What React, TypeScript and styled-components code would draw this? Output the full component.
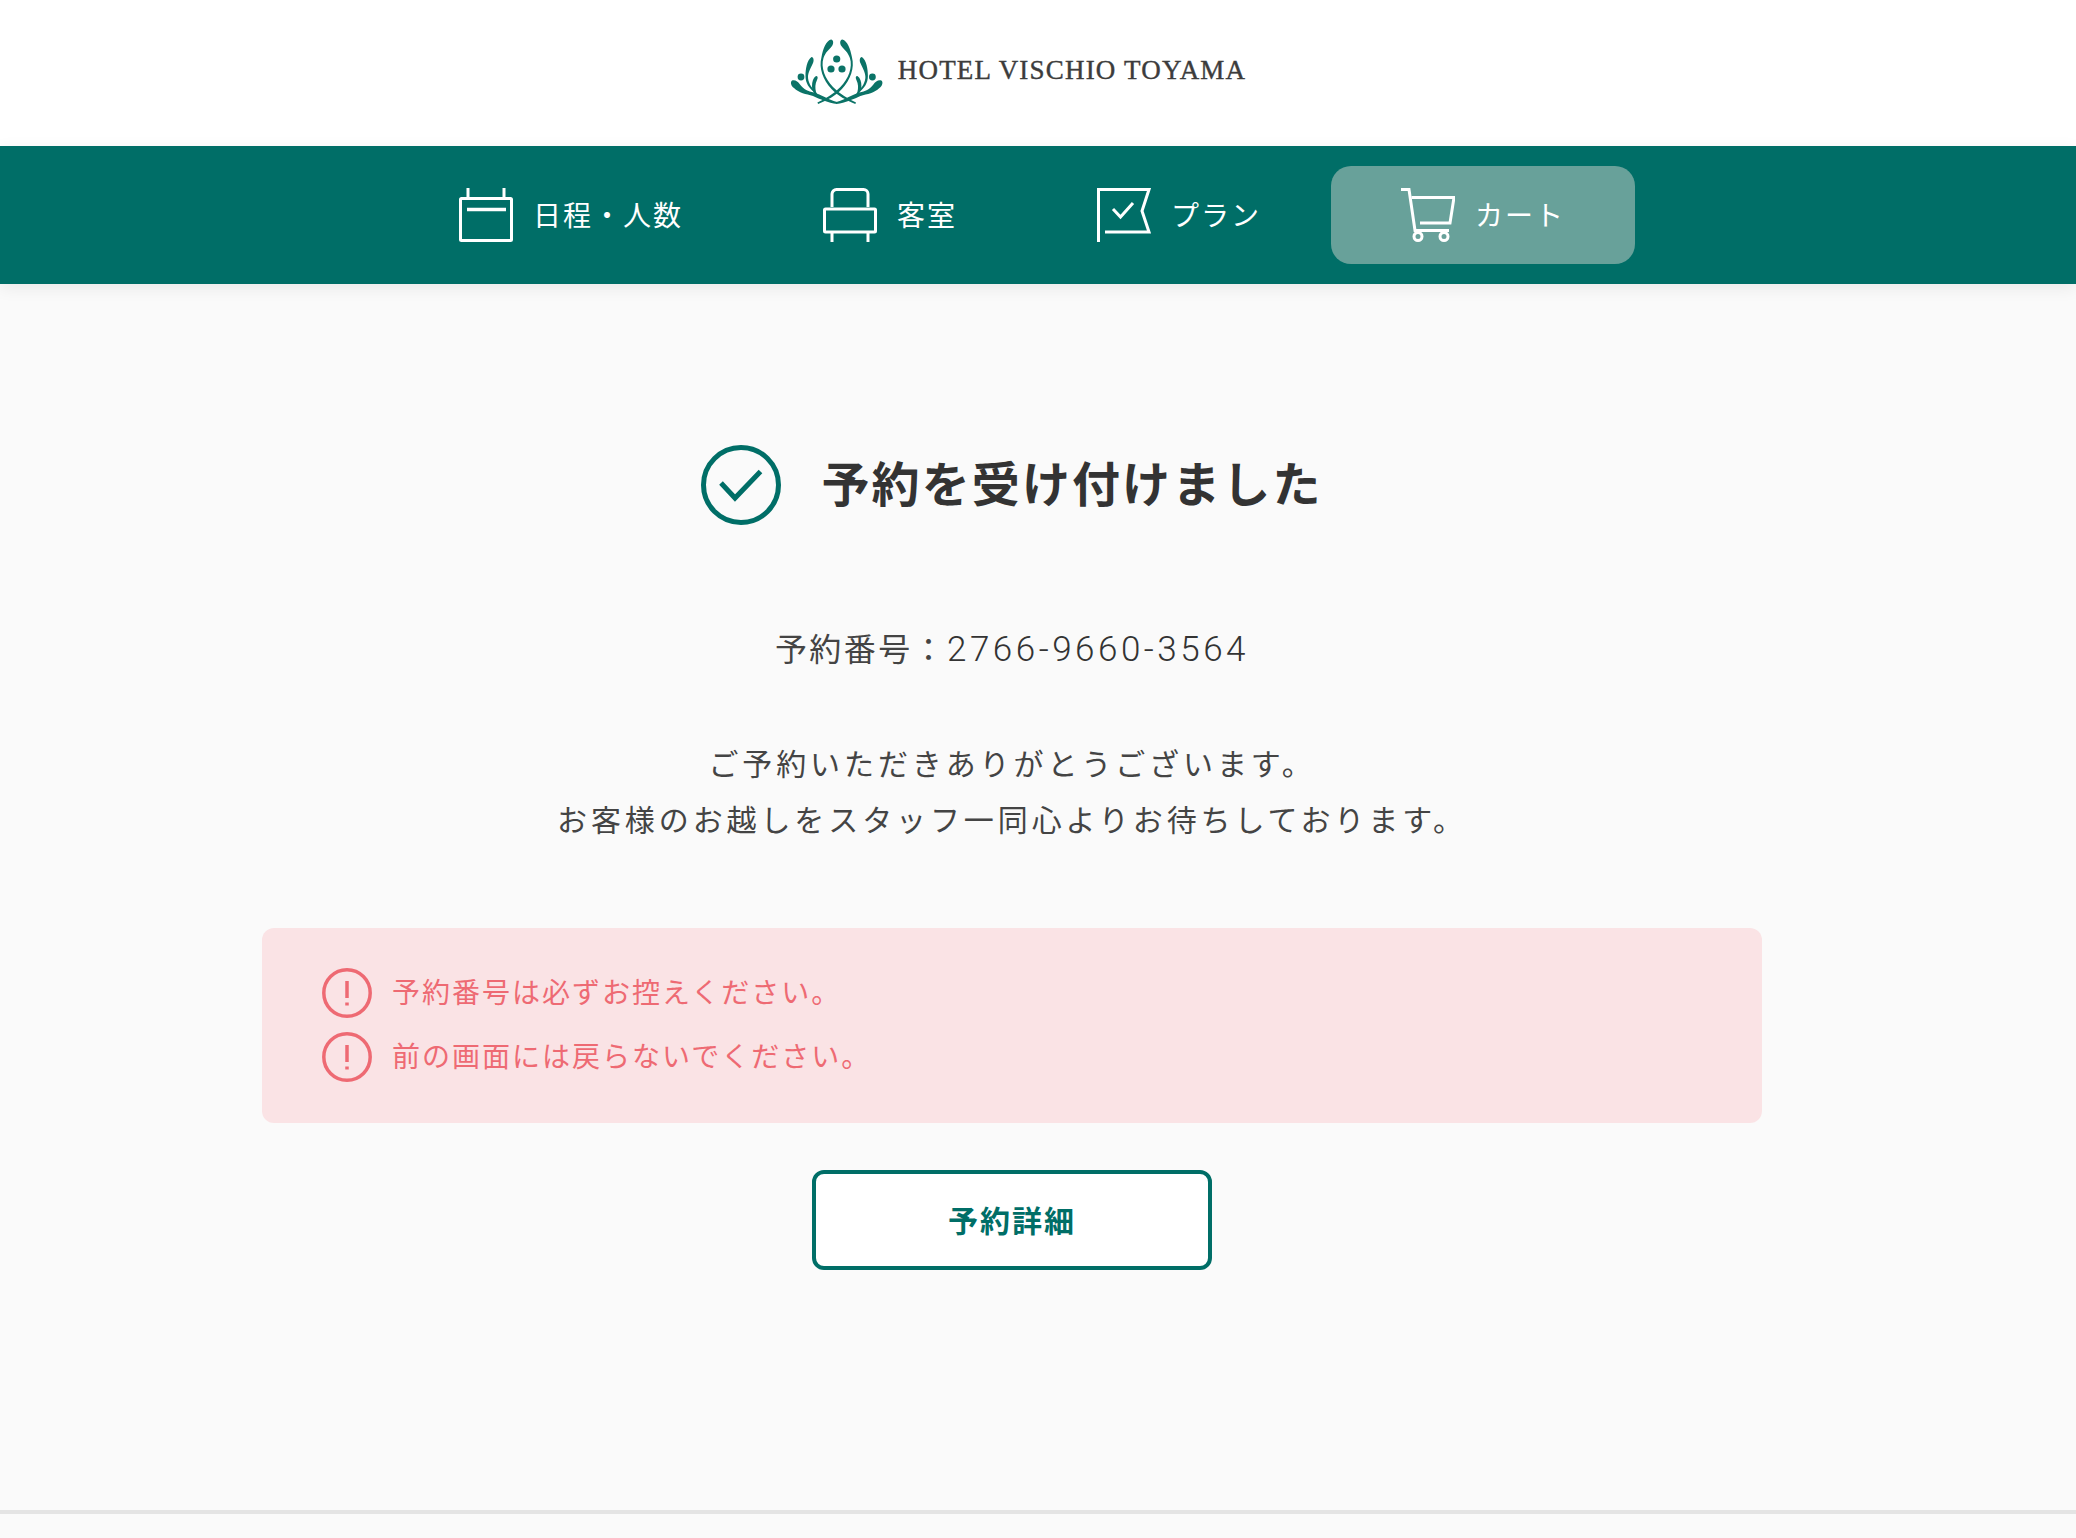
import styled, { createGlobalStyle } from 'styled-components';

const GREEN = '#006e67';
const RED = '#ee6a73';

const GlobalStyle = createGlobalStyle`
  html,
  body {
    margin: 0;
    padding: 0;
    background: #fafafa;
    color: #444;
    font-family: 'Noto Sans CJK JP', 'Noto Sans', sans-serif;
  }

  * {
    box-sizing: border-box;
  }
`;

export default function App() {
  return (
    <>
      <GlobalStyle />
      <Header>
        <LogoMark />
        <LogoText>HOTEL VISCHIO TOYAMA</LogoText>
      </Header>

      <Nav>
        <NavItem>
          <CalendarIcon />
          <NavLabel>日程・人数</NavLabel>
        </NavItem>
        <NavItem>
          <BedIcon />
          <NavLabel>客室</NavLabel>
        </NavItem>
        <NavItem>
          <PlanIcon />
          <NavLabel>プラン</NavLabel>
        </NavItem>
        <NavItem $active>
          <CartIcon />
          <NavLabel>カート</NavLabel>
        </NavItem>
      </Nav>

      <Main>
        <TitleRow>
          <CheckIcon />
          <Title>予約を受け付けました</Title>
        </TitleRow>

        <OrderNumber>
          予約番号：<OrderDigits>2766-9660-3564</OrderDigits>
        </OrderNumber>

        <Message>
          ご予約いただきありがとうございます。
          <br />
          お客様のお越しをスタッフ一同心よりお待ちしております。
        </Message>

        <Notice>
          <NoticeRow>
            <AlertIcon />
            <NoticeText>予約番号は必ずお控えください。</NoticeText>
          </NoticeRow>
          <NoticeRow>
            <AlertIcon />
            <NoticeText>前の画面には戻らないでください。</NoticeText>
          </NoticeRow>
        </Notice>

        <DetailButton type="button">予約詳細</DetailButton>
      </Main>

      <Footer />
    </>
  );
}

function LogoLeaves() {
  return (
    <>
      {/* 中央の長い葉 */}
      <path d="M51 8.500C54 9 53.500 13 52 15C49 19 45.500 21 43.500 27C40.500 36 45 48 53 56C60 63 68 68 76 71.500L75.300 73C66 69 58 65 51.500 58C43 49 38.500 37 41.500 26C43 18 46 10 51 8.500Z" />
      {/* 中段の葉 */}
      <path d="M31.500 26C34 26.500 34 30 33 32C31 37 28 41 28 46C28 51 31 56 35 60L34 61C29 57 25.500 52 25.500 45C25.500 38 27 29 31.500 26Z" />
      <path d="M36 45c2 0 2 2 1 4-2 4-2 8-1 12 1 2 2 3 3 5l-1 1c-3-3-6-7-6-12 0-4 1-8 4-10z" />
      {/* 外側の葉と下の弧 */}
      <path d="M12 49.500c3-1 6 1 8 4 4 5 8 7 14 8 7 2 14 7 23 9.500v2c-9-1-17-5-24-8-7-2-14-3-19-8-3-2-4-6-2-7.500z" />
      <circle cx="21" cy="46" r="3.400" />
    </>
  );
}

function LogoMark() {
  return (
    <LogoSvg viewBox="0 0 114 80" fill="#0b7367" aria-hidden="true">
      <LogoLeaves />
      <g transform="matrix(-1 0 0 1 113.400 0)">
        <LogoLeaves />
      </g>
      <circle cx="56.700" cy="28" r="3.600" />
      <circle cx="51" cy="38" r="3.600" />
      <circle cx="62" cy="38" r="3.600" />
    </LogoSvg>
  );
}

function CalendarIcon() {
  return (
    <NavSvg viewBox="0 0 54 54" aria-hidden="true">
      <rect x="1.500" y="10.500" width="51" height="42" rx="1" />
      <path d="M9 0v10M45 0v10" />
      <path d="M8 21.500h39" strokeWidth="3.600" />
    </NavSvg>
  );
}

function BedIcon() {
  return (
    <NavSvg viewBox="0 0 54 54" aria-hidden="true">
      <path d="M9 19V6a4.500 4.500 0 0 1 4.500-4.500h27A4.500 4.500 0 0 1 45 6v13" />
      <rect x="1.500" y="21" width="51" height="23" rx="1" />
      <path d="M9 44v10M45 44v10" />
    </NavSvg>
  );
}

function PlanIcon() {
  return (
    <NavSvg viewBox="0 0 54 54" aria-hidden="true">
      <path d="M1.500 54V1.500H52L45 23l7 21H8" />
      <path d="M16 21l7.500 8L36 15" />
    </NavSvg>
  );
}

function CartIcon() {
  return (
    <NavSvg viewBox="0 0 54 54" aria-hidden="true">
      <path d="M0 1.500h8L14 42.500h34" />
      <path d="M10.500 9.500H53L49 35H19" />
      <circle cx="17" cy="48.500" r="4" />
      <circle cx="43" cy="48.500" r="4" />
    </NavSvg>
  );
}

function CheckIcon() {
  return (
    <CheckSvg viewBox="0 0 80 80" aria-hidden="true">
      <circle cx="40" cy="40" r="37.500" />
      <path d="M20 38l14 15 25.500-26.500" />
    </CheckSvg>
  );
}

function AlertIcon() {
  return (
    <AlertSvg viewBox="0 0 50 50" aria-hidden="true">
      <circle cx="25" cy="25" r="23.200" />
      <path d="M25 13v17" />
      <path d="M25 34.500v3" />
    </AlertSvg>
  );
}

const Header = styled.header`
  height: 146px;
  padding: 0 50px 5px 0;
  display: flex;
  align-items: center;
  justify-content: center;
  gap: 4px;
  background: #fff;
`;

const LogoSvg = styled.svg`
  width: 114px;
  height: 80px;
  flex: none;
`;

const LogoText = styled.span`
  font-family: 'Liberation Serif', serif;
  font-size: 27px;
  letter-spacing: 1.200px;
  color: #3c3c3c;
  -webkit-text-stroke: 0.4px #3c3c3c;
  white-space: nowrap;
`;

const Nav = styled.nav`
  position: relative;
  height: 138px;
  padding-right: 52px;
  display: flex;
  align-items: center;
  justify-content: center;
  background: ${GREEN};
  box-shadow: 0 4px 16px rgba(0, 0, 0, 0.07);
`;

const NavItem = styled.div<{ $active?: boolean }>`
  height: 98px;
  padding: 0 70px;
  display: flex;
  align-items: center;
  gap: 20px;
  border-radius: 20px;
  background: ${({ $active }) => ($active ? '#68a19a' : 'transparent')};
  color: #fff;
  font-size: 28px;
  letter-spacing: 2px;
  white-space: nowrap;
`;

const NavLabel = styled.span`
  margin-bottom: 2px;
`;

const NavSvg = styled.svg`
  width: 54px;
  height: 54px;
  flex: none;
  fill: none;
  stroke: #fff;
  stroke-width: 3;
`;

const Main = styled.main`
  height: 1226px;
  padding: 161px 52px 0 0;
  display: flex;
  flex-direction: column;
  align-items: center;
`;

const TitleRow = styled.div`
  display: flex;
  align-items: center;
  gap: 40px;
`;

const CheckSvg = styled.svg`
  width: 80px;
  height: 80px;
  flex: none;
  fill: none;
  stroke: ${GREEN};
  stroke-width: 5;
`;

const Title = styled.h1`
  margin: 0;
  padding-bottom: 8px;
  font-size: 48px;
  font-weight: 700;
  line-height: 72px;
  letter-spacing: 2.100px;
  color: #333;
`;

const OrderNumber = styled.p`
  height: 56px;
  margin: 94px 0 0;
  font-size: 32px;
  line-height: 56px;
  letter-spacing: 2.400px;
`;

const OrderDigits = styled.span`
  font-family: Roboto, 'Liberation Sans', sans-serif;
  font-size: 35px;
  font-weight: 300;
  letter-spacing: 3.500px;
  color: #333;
`;

const Message = styled.p`
  margin: 59px 0 0;
  font-size: 30px;
  line-height: 56px;
  letter-spacing: 3.900px;
  text-align: center;
`;

const Notice = styled.div`
  width: 1500px;
  margin-top: 82px;
  padding: 40px 60px 41px;
  display: flex;
  flex-direction: column;
  gap: 14px;
  border-radius: 12px;
  background: #fae3e5;
`;

const NoticeRow = styled.div`
  height: 50px;
  display: flex;
  align-items: flex-start;
  gap: 20px;
  color: ${RED};
  font-size: 28px;
  line-height: 46px;
  letter-spacing: 2px;
`;

const NoticeText = styled.span`
  display: block;
`;

const AlertSvg = styled.svg`
  width: 50px;
  height: 50px;
  flex: none;
  fill: none;
  stroke: ${RED};
  stroke-width: 3.500;
`;

const DetailButton = styled.button`
  width: 400px;
  height: 100px;
  margin-top: 47px;
  padding: 0 0 3px;
  border: 4px solid ${GREEN};
  border-radius: 12px;
  background: #fff;
  color: ${GREEN};
  font-family: inherit;
  font-size: 30px;
  font-weight: 700;
  letter-spacing: 2px;
`;

const Footer = styled.footer`
  height: 28px;
  border-top: 4px solid #e4e4e4;
`;
